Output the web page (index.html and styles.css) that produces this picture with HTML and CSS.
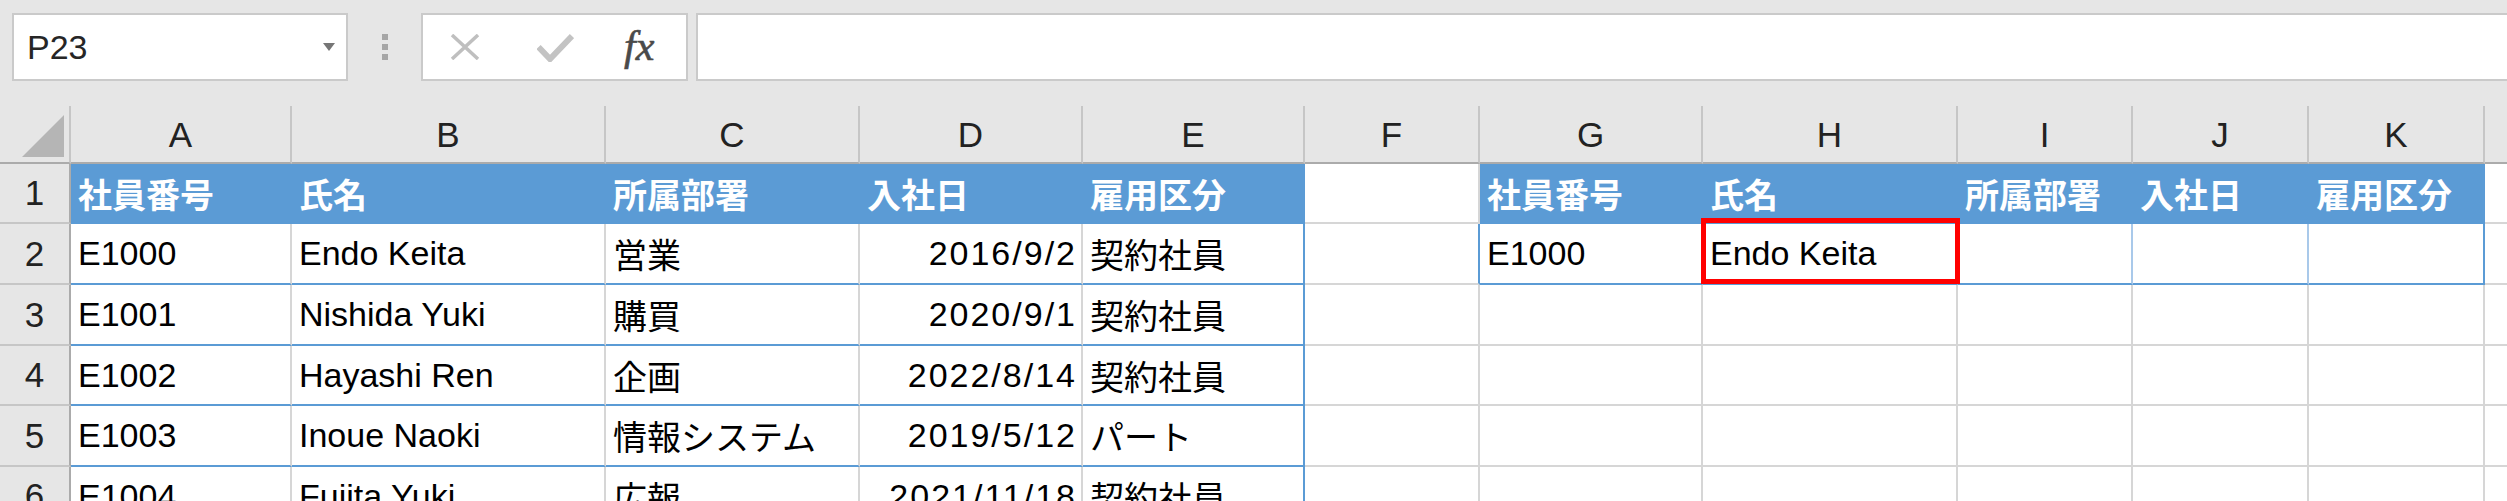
FILE: index.html
```html
<!DOCTYPE html>
<html lang="ja">
<head>
<meta charset="utf-8">
<title>Excel</title>
<link rel="stylesheet" href="styles.css">
</head>
<body>
<div class="app">
  <div class="toolbar">
    <div class="namebox"><span class="nb-text">P23</span><span class="nb-arrow"></span></div>
    <div class="sep"><i></i><i></i><i></i></div>
    <div class="fxbox">
      <svg class="ic-x" width="30" height="26" viewBox="0 0 30 26"><path d="M2 1 L28 25 M28 1 L2 25" stroke="#bfbfbf" stroke-width="3.5" fill="none"/></svg>
      <svg class="ic-ok" width="37" height="29" viewBox="0 0 37 29"><path d="M1.5 14 L13 26 L35 3" stroke="#c3c3c3" stroke-width="6" fill="none"/></svg>
      <span class="ic-fx">fx</span>
    </div>
    <div class="formula"></div>
  </div>

  <div class="sheet">
    <div class="corner"><svg width="42" height="42" viewBox="0 0 42 42"><polygon points="42,0 42,42 0,42" fill="#b5b5b5"/></svg></div>
    <div class="ch">A</div><div class="ch">B</div><div class="ch">C</div><div class="ch">D</div><div class="ch">E</div><div class="ch">F</div><div class="ch">G</div><div class="ch">H</div><div class="ch">I</div><div class="ch">J</div><div class="ch">K</div><div class="ch"></div>

    <div class="rh">1</div>
    <div class="cell th">社員番号</div><div class="cell th">氏名</div><div class="cell th">所属部署</div><div class="cell th">入社日</div><div class="cell th">雇用区分</div>
    <div class="cell"></div>
    <div class="cell th">社員番号</div><div class="cell th">氏名</div><div class="cell th">所属部署</div><div class="cell th">入社日</div><div class="cell th">雇用区分</div>
    <div class="cell"></div>

    <div class="rh">2</div>
    <div class="cell td">E1000</div><div class="cell td">Endo Keita</div><div class="cell td">営業</div><div class="cell td num">2016/9/2</div><div class="cell td td-end">契約社員</div>
    <div class="cell pre-tb"></div>
    <div class="cell tb">E1000</div><div class="cell tb selected">Endo Keita<span class="sel"></span></div><div class="cell tb"></div><div class="cell tb"></div><div class="cell tb tb-end"></div>
    <div class="cell"></div>

    <div class="rh">3</div>
    <div class="cell td">E1001</div><div class="cell td">Nishida Yuki</div><div class="cell td">購買</div><div class="cell td num">2020/9/1</div><div class="cell td td-end">契約社員</div>
    <div class="cell"></div><div class="cell"></div><div class="cell"></div><div class="cell"></div><div class="cell"></div><div class="cell"></div><div class="cell"></div>

    <div class="rh">4</div>
    <div class="cell td">E1002</div><div class="cell td">Hayashi Ren</div><div class="cell td">企画</div><div class="cell td num">2022/8/14</div><div class="cell td td-end">契約社員</div>
    <div class="cell"></div><div class="cell"></div><div class="cell"></div><div class="cell"></div><div class="cell"></div><div class="cell"></div><div class="cell"></div>

    <div class="rh">5</div>
    <div class="cell td">E1003</div><div class="cell td">Inoue Naoki</div><div class="cell td">情報システム</div><div class="cell td num">2019/5/12</div><div class="cell td td-end">パート</div>
    <div class="cell"></div><div class="cell"></div><div class="cell"></div><div class="cell"></div><div class="cell"></div><div class="cell"></div><div class="cell"></div>

    <div class="rh">6</div>
    <div class="cell td">E1004</div><div class="cell td">Fujita Yuki</div><div class="cell td">広報</div><div class="cell td num">2021/11/18</div><div class="cell td td-end">契約社員</div>
    <div class="cell"></div><div class="cell"></div><div class="cell"></div><div class="cell"></div><div class="cell"></div><div class="cell"></div><div class="cell"></div>
  </div>
</div>
</body>
</html>
```

FILE: styles.css
```css
* { box-sizing: border-box; }
html, body {
  margin: 0;
  padding: 0;
  width: 2507px;
  height: 501px;
  overflow: hidden;
  background: #e6e6e6;
  font-family: "Liberation Sans", "Noto Sans CJK JP", sans-serif;
}
.app {
  width: 2507px;
  height: 501px;
  overflow: hidden;
}

/* ---------- toolbar ---------- */
.toolbar {
  display: flex;
  align-items: stretch;
  height: 81px;
  padding: 13px 0 0 12px;
  margin-bottom: 25px;
}
.namebox {
  width: 336px;
  background: #fff;
  border: 2px solid #cacaca;
  display: flex;
  align-items: center;
  justify-content: space-between;
  padding: 0 11px 0 13px;
}
.nb-text {
  font-size: 34px;
  color: #262626;
}
.nb-arrow {
  width: 0;
  height: 0;
  border-left: 6px solid transparent;
  border-right: 6px solid transparent;
  border-top: 8px solid #767676;
}
.sep {
  width: 73px;
  display: flex;
  flex-direction: column;
  align-items: center;
  justify-content: center;
  gap: 4px;
}
.sep i {
  display: block;
  width: 6px;
  height: 6px;
  background: #a6a6a6;
}
.fxbox {
  width: 267px;
  background: #fff;
  border: 2px solid #cacaca;
  display: flex;
  align-items: center;
  padding-left: 27px;
}
.ic-ok { margin-left: 57px; }
.ic-fx {
  margin-left: 50px;
  font-family: "Liberation Serif", "DejaVu Serif", serif;
  font-style: italic;
  font-size: 42px;
  color: #4a4a4a;
  line-height: 1;
  margin-top: -2px;
  -webkit-text-stroke: 0.6px #4a4a4a;
}
.formula {
  flex: 1;
  margin-left: 8px;
  margin-right: -10px;
  background: #fff;
  border: 2px solid #cacaca;
}

/* ---------- sheet ---------- */
.sheet {
  display: grid;
  grid-template-columns: 71px 221px 314px 254px 223px 222px 175px 223px 255px 175px 176px 176px 175px;
  grid-template-rows: 58px 60px 61px 61px 60px 61px 60px;
  width: 2660px;
  font-size: 34px;
  color: #000;
}
.corner {
  background: #e6e6e6;
  border-right: 2px solid #c6c6c6;
  border-bottom: 2px solid #ababab;
  display: flex;
  justify-content: flex-end;
  align-items: flex-end;
  padding: 0 5px 5px 0;
}
.corner svg { display: block; }
.ch {
  background: #e6e6e6;
  border-right: 2px solid #c6c6c6;
  border-bottom: 2px solid #ababab;
  display: flex;
  align-items: center;
  justify-content: center;
  font-size: 35px;
  color: #222;
  padding-top: 2px;
}
.rh {
  background: #e6e6e6;
  border-right: 2px solid #ababab;
  border-bottom: 2px solid #c6c6c6;
  display: flex;
  align-items: center;
  justify-content: center;
  font-size: 35px;
  color: #222;
}
.cell {
  background: #fff;
  border-right: 2px solid #d6d6d6;
  border-bottom: 2px solid #d6d6d6;
  display: flex;
  align-items: center;
  padding: 0 7px;
  white-space: nowrap;
}
.th {
  background: #5b9bd5;
  border-color: #5b9bd5;
  color: #fff;
  font-weight: bold;
}
.td { border-bottom-color: #5b9bd5; }
.td-end { border-right-color: #5b9bd5; }
.num {
  justify-content: flex-end;
  padding-right: 4px;
  letter-spacing: 2px;
}
.pre-tb { border-right-color: #5b9bd5; }
.tb {
  border-bottom-color: #5b9bd5;
  border-right-color: #a9c9ea;
}
.tb-end { border-right-color: #5b9bd5; }
.selected {
  position: relative;
  z-index: 2;
  overflow: visible;
}
.sel {
  position: absolute;
  left: -2px;
  top: -6px;
  width: 259px;
  height: 66px;
  border: 5px solid #ff0000;
  pointer-events: none;
}
```
